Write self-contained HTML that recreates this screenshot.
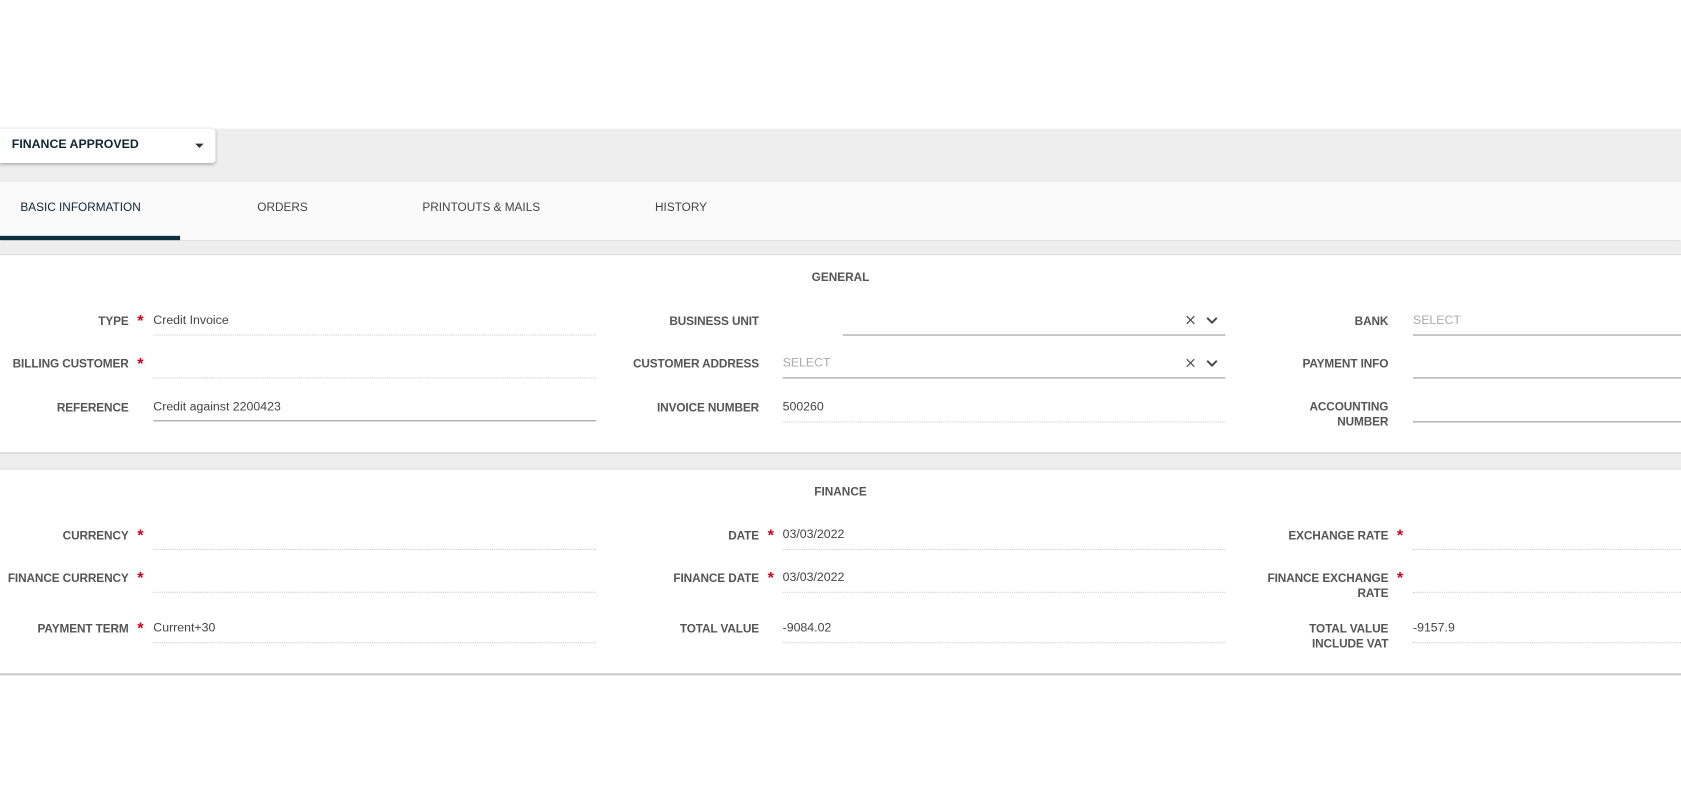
<!DOCTYPE html>
<html><head><style>
body{margin:0;width:1681px;height:802px;background:#fff;font-family:"Liberation Sans",sans-serif;position:relative;overflow:hidden}
#w{position:absolute;left:0;top:0;width:1568px;height:748px;transform:scale(1.07207);transform-origin:0 0}
.a{position:absolute}
.tab{position:absolute;top:188px;font-size:11px;color:#444}
.lbl{position:absolute;font-size:11px;font-weight:bold;color:#555;text-align:right;line-height:14px;letter-spacing:-.1px}
.st{position:absolute;color:#d0021b;font-size:15px;font-weight:bold}
.v{position:absolute;font-size:11.5px;color:#444}
.ph{position:absolute;font-size:11.5px;color:#aaa}
.dl{position:absolute;height:0;border-top:1px dotted #ccc}
.sl{position:absolute;height:0;border-top:1px solid #999}
.h{position:absolute;font-size:11px;font-weight:bold;color:#555;width:1568px;text-align:center}
.ic{position:absolute}
</style></head><body><div id="w">
<div class="a" style="left:0;top:120px;width:1568px;height:50px;background:#eee"></div>
<div class="a" style="left:0;top:120px;width:201px;height:32px;background:#fff;box-shadow:0 1px 3px rgba(0,0,0,.3);border-radius:0 3px 3px 0"></div>
<div class="a" style="left:11px;top:129px;font-size:11.5px;font-weight:bold;color:#0d2535">FINANCE APPROVED</div>
<div class="a" style="left:182px;top:134px;width:0;height:0;border-left:4px solid transparent;border-right:4px solid transparent;border-top:4px solid #333"></div>
<div class="a" style="left:0;top:170px;width:1568px;height:54px;background:#fafafa;box-shadow:0 1px 2px rgba(0,0,0,.25)"></div>
<div class="tab" style="left:19px;color:#0d2535">BASIC INFORMATION</div>
<div class="tab" style="left:240px">ORDERS</div>
<div class="tab" style="left:394px">PRINTOUTS &amp; MAILS</div>
<div class="tab" style="left:611px">HISTORY</div>
<div class="a" style="left:0;top:220px;width:168px;height:4px;background:#0d3040"></div>
<div class="a" style="left:0;top:225px;width:1568px;height:12px;background:#eee;border-bottom:1px solid #ddd"></div>
<div class="a" style="left:0;top:422px;width:1568px;height:14px;background:#eee;border-top:1px solid #ccc;border-bottom:1px solid #ddd"></div>
<div class="a" style="left:0;top:628px;width:1568px;height:2px;background:#ccc"></div>
<div class="h" style="top:253px">GENERAL</div>
<div class="h" style="top:453px">FINANCE</div>

<div class="lbl" style="right:1448px;top:293px">TYPE</div><div class="st" style="left:128px;top:291px">*</div><div class="v" style="left:143px;top:293px">Credit Invoice</div><div class="dl" style="left:143px;top:312px;width:413px"></div>
<div class="lbl" style="right:1448px;top:333px">BILLING CUSTOMER</div><div class="st" style="left:128px;top:331px">*</div><div class="dl" style="left:143px;top:352px;width:413px"></div>
<div class="lbl" style="right:1448px;top:374px">REFERENCE</div><div class="v" style="left:143px;top:374px">Credit against 2200423</div><div class="sl" style="left:143px;top:392px;width:413px"></div>

<div class="lbl" style="right:860px;top:293px">BUSINESS UNIT</div><div class="sl" style="left:786px;top:312px;width:357px"></div>
<svg class="ic" style="left:1106px;top:294px" width="32" height="10" viewBox="0 0 32 10"><path d="M1 1L8 8M8 1L1 8" stroke="#555" stroke-width="1.2" fill="none"/><path d="M20 2.5L24.5 7L29 2.5" stroke="#444" stroke-width="1.8" fill="none"/></svg>
<div class="lbl" style="right:860px;top:333px">CUSTOMER ADDRESS</div><div class="ph" style="left:730px;top:333px">SELECT</div><div class="sl" style="left:730px;top:352px;width:413px"></div>
<svg class="ic" style="left:1106px;top:334px" width="32" height="10" viewBox="0 0 32 10"><path d="M1 1L8 8M8 1L1 8" stroke="#555" stroke-width="1.2" fill="none"/><path d="M20 2.5L24.5 7L29 2.5" stroke="#444" stroke-width="1.8" fill="none"/></svg>
<div class="lbl" style="right:860px;top:374px">INVOICE NUMBER</div><div class="v" style="left:730px;top:374px">500260</div><div class="dl" style="left:730px;top:393px;width:413px"></div>

<div class="lbl" style="right:273px;top:293px">BANK</div><div class="ph" style="left:1318px;top:293px">SELECT</div><div class="sl" style="left:1318px;top:312px;width:250px"></div>
<div class="lbl" style="right:273px;top:333px">PAYMENT INFO</div><div class="sl" style="left:1318px;top:352px;width:250px"></div>
<div class="lbl" style="right:273px;top:373px">ACCOUNTING<br>NUMBER</div><div class="sl" style="left:1318px;top:393px;width:250px"></div>

<div class="lbl" style="right:1448px;top:493px">CURRENCY</div><div class="st" style="left:128px;top:491px">*</div><div class="dl" style="left:143px;top:512px;width:413px"></div>
<div class="lbl" style="right:1448px;top:533px">FINANCE CURRENCY</div><div class="st" style="left:128px;top:531px">*</div><div class="dl" style="left:143px;top:552px;width:413px"></div>
<div class="lbl" style="right:1448px;top:580px">PAYMENT TERM</div><div class="st" style="left:128px;top:578px">*</div><div class="v" style="left:143px;top:580px">Current+30</div><div class="dl" style="left:143px;top:599px;width:413px"></div>

<div class="lbl" style="right:860px;top:493px">DATE</div><div class="st" style="left:716px;top:491px">*</div><div class="v" style="left:730px;top:493px">03/03/2022</div><div class="dl" style="left:730px;top:512px;width:413px"></div>
<div class="lbl" style="right:860px;top:533px">FINANCE DATE</div><div class="st" style="left:716px;top:531px">*</div><div class="v" style="left:730px;top:533px">03/03/2022</div><div class="dl" style="left:730px;top:552px;width:413px"></div>
<div class="lbl" style="right:860px;top:580px">TOTAL VALUE</div><div class="v" style="left:730px;top:580px">-9084.02</div><div class="dl" style="left:730px;top:599px;width:413px"></div>

<div class="lbl" style="right:273px;top:493px">EXCHANGE RATE</div><div class="st" style="left:1303px;top:491px">*</div><div class="dl" style="left:1318px;top:512px;width:250px"></div>
<div class="lbl" style="right:273px;top:533px">FINANCE EXCHANGE<br>RATE</div><div class="st" style="left:1303px;top:531px">*</div><div class="dl" style="left:1318px;top:552px;width:250px"></div>
<div class="lbl" style="right:273px;top:580px">TOTAL VALUE<br>INCLUDE VAT</div><div class="v" style="left:1318px;top:580px">-9157.9</div><div class="dl" style="left:1318px;top:599px;width:250px"></div>
</div></body></html>
